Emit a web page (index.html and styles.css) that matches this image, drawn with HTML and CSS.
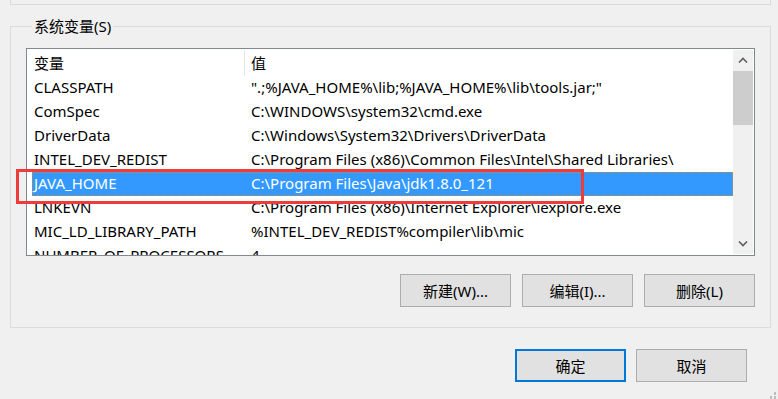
FILE: index.html
```html
<!DOCTYPE html>
<html lang="zh-CN">
<head>
<meta charset="utf-8">
<title>系统变量</title>
<link rel="stylesheet" href="styles.css">
</head>
<body>
<div class="prev-group"></div>
<fieldset class="group">
  <legend class="legend">系统变量(S)</legend>
  <div class="listbox">
    <div class="list-body">
      <div class="list-header">
        <div class="hcell hcell-name">变量</div>
        <div class="hcell hcell-value">值</div>
      </div>
      <div class="row"><div class="cell cell-name">CLASSPATH</div><div class="cell">".;%JAVA_HOME%\lib;%JAVA_HOME%\lib\tools.jar;"</div></div>
      <div class="row"><div class="cell cell-name">ComSpec</div><div class="cell">C:\WINDOWS\system32\cmd.exe</div></div>
      <div class="row"><div class="cell cell-name">DriverData</div><div class="cell">C:\Windows\System32\Drivers\DriverData</div></div>
      <div class="row"><div class="cell cell-name">INTEL_DEV_REDIST</div><div class="cell">C:\Program Files (x86)\Common Files\Intel\Shared Libraries\</div></div>
      <div class="row row-selected"><div class="cell cell-name">JAVA_HOME</div><div class="cell">C:\Program Files\Java\jdk1.8.0_121</div></div>
      <div class="row"><div class="cell cell-name">LNKEVN</div><div class="cell">C:\Program Files (x86)\Internet Explorer\iexplore.exe</div></div>
      <div class="row"><div class="cell cell-name">MIC_LD_LIBRARY_PATH</div><div class="cell">%INTEL_DEV_REDIST%compiler\lib\mic</div></div>
      <div class="row"><div class="cell cell-name">NUMBER_OF_PROCESSORS</div><div class="cell">4</div></div>
    </div>
    <div class="scrollbar">
      <div class="sb-arrow">
        <svg width="10" height="6" viewBox="0 0 10 6"><path d="M1 5.5 L5 1.5 L9 5.5" fill="none" stroke="#606060" stroke-width="1.6"/></svg>
      </div>
      <div class="sb-thumb"></div>
      <div class="sb-track"></div>
      <div class="sb-arrow">
        <svg width="10" height="6" viewBox="0 0 10 6"><path d="M1 0.5 L5 4.5 L9 0.5" fill="none" stroke="#606060" stroke-width="1.6"/></svg>
      </div>
    </div>
  </div>
  <div class="group-buttons">
    <button class="btn">新建(W)...</button>
    <button class="btn">编辑(I)...</button>
    <button class="btn">删除(L)</button>
  </div>
</fieldset>
<div class="footer">
  <button class="btn btn-default">确定</button>
  <button class="btn">取消</button>
</div>
<div class="highlight-box"></div>
<svg class="grip" width="8" height="8" viewBox="0 0 8 8">
  <rect x="0" y="5" width="2" height="3" fill="#bdbdbd"/>
  <rect x="4" y="5" width="2" height="3" fill="#bdbdbd"/>
  <rect x="4" y="1" width="2" height="3" fill="#bdbdbd"/>
</svg>
</body>
</html>
```
FILE: styles.css
```css
html, body {
  margin: 0;
  padding: 0;
}
body {
  width: 778px;
  height: 399px;
  overflow: hidden;
  background: #f0f0f0;
  font-family: "Noto Sans", "Noto Sans CJK SC", sans-serif;
  font-size: 15px;
  color: #000;
  position: relative;
}
.prev-group {
  margin-left: 10px;
  width: 759px;
  height: 4px;
  border: 1px solid #dcdcdc;
  border-top: none;
}
.group {
  margin: 11px 0 0 10px;
  width: 761px;
  box-sizing: border-box;
  border: 1px solid #dcdcdc;
  padding: 0 15px 20px 15px;
  min-width: 0;
}
.legend {
  margin-left: 6px;
  padding: 0 2px;
  height: 20px;
  line-height: 20px;
  font-size: 15px;
}
.listbox {
  margin-top: 12px;
  width: 729px;
  height: 208px;
  box-sizing: border-box;
  border: 1px solid #828790;
  background: #fff;
  display: flex;
  overflow: hidden;
}
.list-body {
  flex: 1;
  overflow: hidden;
}
.list-header {
  display: flex;
  height: 27px;
  line-height: 26px;
}
.hcell {
  box-sizing: border-box;
  height: 26px;
  margin-top: 1px;
  line-height: 26px;
  white-space: nowrap;
}
.hcell-name {
  width: 218px;
  padding-left: 7px;
  border-right: 1px solid #e5e5e5;
}
.hcell-value {
  padding-left: 6px;
}
.row {
  display: flex;
  margin-left: 5px;
  height: 24px;
  line-height: 23px;
  box-sizing: border-box;
  white-space: nowrap;
}
.cell {
  padding-left: 2px;
  white-space: nowrap;
}
.cell-name {
  width: 217px;
  flex: none;
  box-sizing: border-box;
}
.row-selected {
  background: #3399ff;
  color: #fff;
  border: 1px dotted #c9894a;
  line-height: 21px;
}
.row-selected .cell-name {
  width: 216px;
  padding-left: 1px;
}
.scrollbar {
  width: 20px;
  flex: none;
  margin: 1px 1px 1px 0;
  background: #f0f0f0;
  display: flex;
  flex-direction: column;
}
.sb-arrow {
  height: 20px;
  display: flex;
  align-items: center;
  justify-content: center;
  flex: none;
}
.sb-thumb {
  margin-top: 1px;
  height: 54px;
  background: #cdcdcd;
  flex: none;
}
.sb-track {
  flex: 1;
}
.group-buttons {
  display: flex;
  justify-content: flex-end;
  gap: 11px;
  margin-top: 18px;
  padding-right: 0;
}
.btn {
  width: 111px;
  height: 33px;
  box-sizing: border-box;
  background: #e1e1e1;
  border: 1px solid #adadad;
  font-family: "Noto Sans", "Noto Sans CJK SC", sans-serif;
  font-size: 15px;
  color: #000;
  padding: 0;
  margin: 0;
}
.btn-default {
  border: 2px solid #0078d7;
}
.footer {
  display: flex;
  justify-content: flex-end;
  gap: 10px;
  margin-top: 21px;
  padding-right: 31px;
}
.highlight-box {
  position: absolute;
  left: 16px;
  top: 169px;
  width: 562px;
  height: 29px;
  border: 3px solid #ef3b3b;
}
.grip {
  position: absolute;
  right: 0;
  bottom: 0;
}
```
